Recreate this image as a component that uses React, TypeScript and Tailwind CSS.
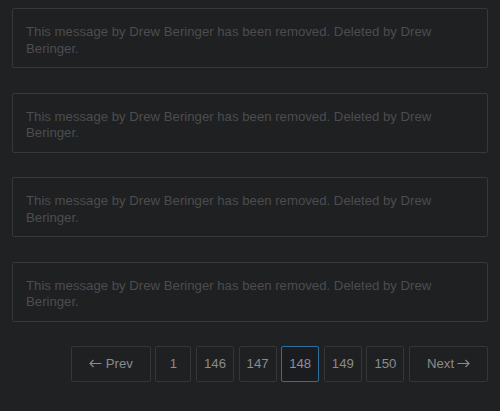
import React from "react";

const msgs = [0, 1, 2, 3];

function Arrow({ dir }: { dir: "l" | "r" }) {
  return (
    <svg width="13" height="9" viewBox="0 0 13 9" className="shrink-0">
      {dir === "l" ? (
        <path d="M12.5 4.5H1M4.5 1L1 4.5L4.5 8" stroke="#8a8b8d" strokeWidth="1.1" fill="none" />
      ) : (
        <path d="M0.5 4.5H12M8.5 1L12 4.5L8.5 8" stroke="#8a8b8d" strokeWidth="1.1" fill="none" />
      )}
    </svg>
  );
}

function Btn({ children, w, active }: { children: React.ReactNode; w: string; active?: boolean }) {
  return (
    <div
      className={
        "flex h-[36px] items-center justify-center rounded-[2px] border text-[13.2px] " +
        w +
        (active
          ? " border-[#2f6f9b] bg-[#1a1c1f] text-[#8e9092]"
          : " border-[#353638] bg-[#1f2022] text-[#8a8b8d]")
      }
    >
      {children}
    </div>
  );
}

export default function App() {
  return (
    <div
      className="min-h-[411px] w-[500px] bg-[#202123] px-[12px] pt-[8px]"
      style={{ fontFamily: '"Liberation Sans", Arial, sans-serif' }}
    >
      <div className="flex flex-col gap-[24.67px]">
        {msgs.map((i) => (
          <div
            key={i}
            className="h-[60px] rounded-[2px] border border-[#37383a] bg-[#1f2022] pl-[13px] pr-[14px] pt-[15px] text-[13.2px] leading-[16.5px] text-[#4c4d4f]"
          >
            This message by Drew Beringer has been removed. Deleted by Drew Beringer.
          </div>
        ))}
      </div>
      <div className="mt-[24px] flex justify-end gap-[4.6px]">
        <Btn w="w-[80px] gap-[4px]">
          <Arrow dir="l" />
          <span>Prev</span>
        </Btn>
        <Btn w="w-[36px]">1</Btn>
        <Btn w="w-[38px]">146</Btn>
        <Btn w="w-[38px]">147</Btn>
        <Btn w="w-[38px]" active>
          148
        </Btn>
        <Btn w="w-[38px]">149</Btn>
        <Btn w="w-[38px]">150</Btn>
        <Btn w="w-[79px] gap-[3px]">
          <span>Next</span>
          <Arrow dir="r" />
        </Btn>
      </div>
    </div>
  );
}
